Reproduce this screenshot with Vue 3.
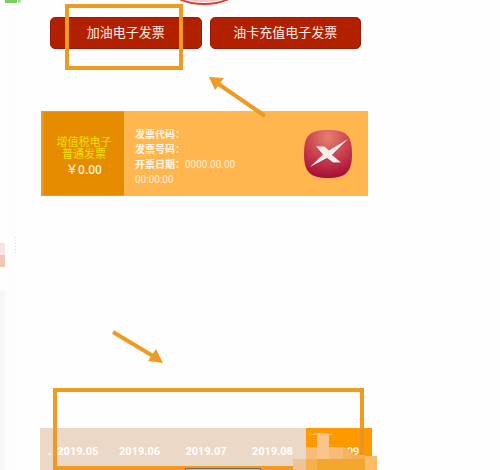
<script setup>
import { ref } from 'vue'

const actions = ['加油电子发票', '油卡充值电子发票']
const months = ['2019.05', '2019.06', '2019.07', '2019.08', '2019.09']
const active = ref('2019.09')
</script>

<template>
  <div class="page">
    <svg class="backdrop" width="400" height="470" viewBox="0 0 400 470" aria-hidden="true">
      <rect x="5" y="0" width="11" height="470" fill="#fdfdfd" />
      <rect x="0" y="291" width="5" height="179" fill="#f7f7f7" />
      <rect x="0" y="243" width="5" height="12" fill="#f5e6e2" />
      <rect x="0" y="255" width="5" height="12" fill="#ecc8b3" />
      <path d="M15.500 237V254" stroke="#dedede" stroke-dasharray="1 2" />
      <path d="M5 0H17V3H5Z" fill="#7dcb65" />
      <path d="M18 0H20L22 2L18 3Z" fill="#a5dc94" />
      <ellipse cx="204" cy="-10" rx="30" ry="11" fill="none" stroke="#efc5c2" stroke-width="2" />
      <ellipse cx="204" cy="-10" rx="32" ry="14" fill="none" stroke="#d8403a" stroke-width="2" />
    </svg>

    <main class="content">
      <div class="actions">
        <button v-for="label in actions" :key="label" type="button" class="action">{{ label }}</button>
      </div>

      <section class="invoice">
        <div class="amount">
          <p class="kind">增值税电子<br />普通发票</p>
          <p class="price">￥0.00</p>
        </div>
        <div class="details">
          <p><b>发票代码：</b></p>
          <p><b>发票号码：</b></p>
          <p><b>开票日期：</b>0000.00.00</p>
          <p>00:00:00</p>
        </div>
        <svg class="status" width="48" height="50" viewBox="0 0 48 50" aria-hidden="true">
          <defs>
            <radialGradient id="badge" cx="0.5" cy="0.15" r="0.85">
              <stop offset="0" stop-color="#e8806f" />
              <stop offset="0.5" stop-color="#cc4450" />
              <stop offset="1" stop-color="#a80e38" />
            </radialGradient>
          </defs>
          <path d="M24 1C42 1 48 6 48 25C48 43 42 49 24 49C6 49 0 43 0 25C0 6 6 1 24 1Z" fill="url(#badge)" />
          <path d="M44 11L28 27L37 34.500H29L23 30L6 39L19 26L12 19H20L25 23Z" fill="#861d31" opacity="0.5" />
          <path d="M44 10L28 26L37 33.500H29L23 29L6 38L19 25.500L12 17.500H20.500L25 21.500Z" fill="#f3efeb" />
        </svg>
      </section>

      <nav class="months">
        <button
          v-for="(month, i) in months"
          :key="month"
          type="button"
          class="month"
          :class="{ active: active === month }"
          @click="active = month"
        ><span v-if="i === 0" class="dot">.</span>{{ month }}</button>
      </nav>
    </main>

    <svg class="notes" width="400" height="470" viewBox="0 0 400 470" aria-hidden="true">
      <g fill="none" stroke="#ee9b23" stroke-width="4">
        <rect x="67" y="6" width="114" height="62" />
        <path d="M362 428V390H55V468H310" />
        <path d="M265 116L217 83" />
        <path d="M113 332L153 356" />
      </g>
      <path d="M362 428V458" stroke="#e99424" stroke-width="4" />
      <g fill="#ee9b23">
        <path d="M209 77L224 78L215 90Z" />
        <path d="M163 363L148 361L156 349Z" />
      </g>
      <path d="M185 470V468H261V470Z" fill="#c4bb9b" />
      <path d="M185.500 470V468.500H260.500V470" fill="none" stroke="#697064" />
      <path d="M309 435Q321 431 334 435Z" fill="#ffc16b" />
      <rect x="306" y="447" width="37" height="12" fill="#f6bd78" />
      <path d="M343 447Q350 449 353 455V459H343Z" fill="#f4b263" />
      <rect x="317" y="434" width="12" height="25" fill="#f9c58a" />
      <rect x="353" y="455" width="12" height="4" fill="#f4ad4f" />
      <rect x="293" y="459" width="13" height="11" fill="#f0c396" />
      <rect x="306" y="459" width="59" height="11" fill="#f3a62c" />
      <rect x="306" y="459" width="11" height="11" fill="#f4b04c" />
      <rect x="365" y="456" width="12" height="14" fill="#fdbd68" />
    </svg>
  </div>
</template>

<style>
body {
  margin: 0;
  background: #fefefe;
}
</style>

<style scoped>
.page {
  position: relative;
  min-height: 100vh;
  display: flex;
  overflow: hidden;
  font-family: Roboto, "Noto Sans CJK SC", sans-serif;
}

.backdrop,
.notes {
  position: absolute;
  top: 0;
  left: 0;
  pointer-events: none;
}

.content {
  flex: 1;
  display: flex;
  flex-direction: column;
  position: relative;
  padding: 17px 128px 0 40px;
}

p {
  margin: 0;
}

button {
  border: 0;
  padding: 0;
  color: #fff;
  font-family: inherit;
  cursor: pointer;
}

.actions {
  display: grid;
  grid-template-columns: 1fr 1fr;
  gap: 8px;
  padding: 0 11px 0 10px;
}

.action {
  height: 32px;
  border: 1px solid #981d09;
  border-radius: 5px;
  background: #b12100;
  color: #fff0e9;
  font-size: 13px;
  line-height: 30px;
}

.invoice {
  display: flex;
  align-items: center;
  margin: 62px 4px 0 1px;
  background: #ffb64e;
}

.amount {
  box-sizing: border-box;
  width: 83px;
  height: 85px;
  padding-top: 25px;
  border: solid #e79a25;
  border-width: 1px 0 1px 3px;
  background: #e58b00;
  text-align: center;
}

.kind {
  color: #eee000;
  font-size: 11px;
  line-height: 12px;
}

.price {
  margin-top: 1px;
  color: #fff0dc;
  font-size: 12px;
  font-weight: 500;
  line-height: 16px;
}

.details {
  flex: 1;
  padding: 6px 0 0 11px;
  color: #ffeed7;
  font-size: 10px;
  line-height: 15px;
}

.details b {
  color: #fff7ec;
}

.status {
  margin-right: 16px;
}

.months {
  display: grid;
  grid-template-columns: repeat(5, 1fr);
  margin-top: auto;
}

.month {
  height: 42px;
  padding-top: 4px;
  background: #ebd8c6;
  font-size: 11px;
  font-weight: 700;
}

.month.active {
  background: #ff9900;
}

.dot {
  margin-right: 6px;
}
</style>
